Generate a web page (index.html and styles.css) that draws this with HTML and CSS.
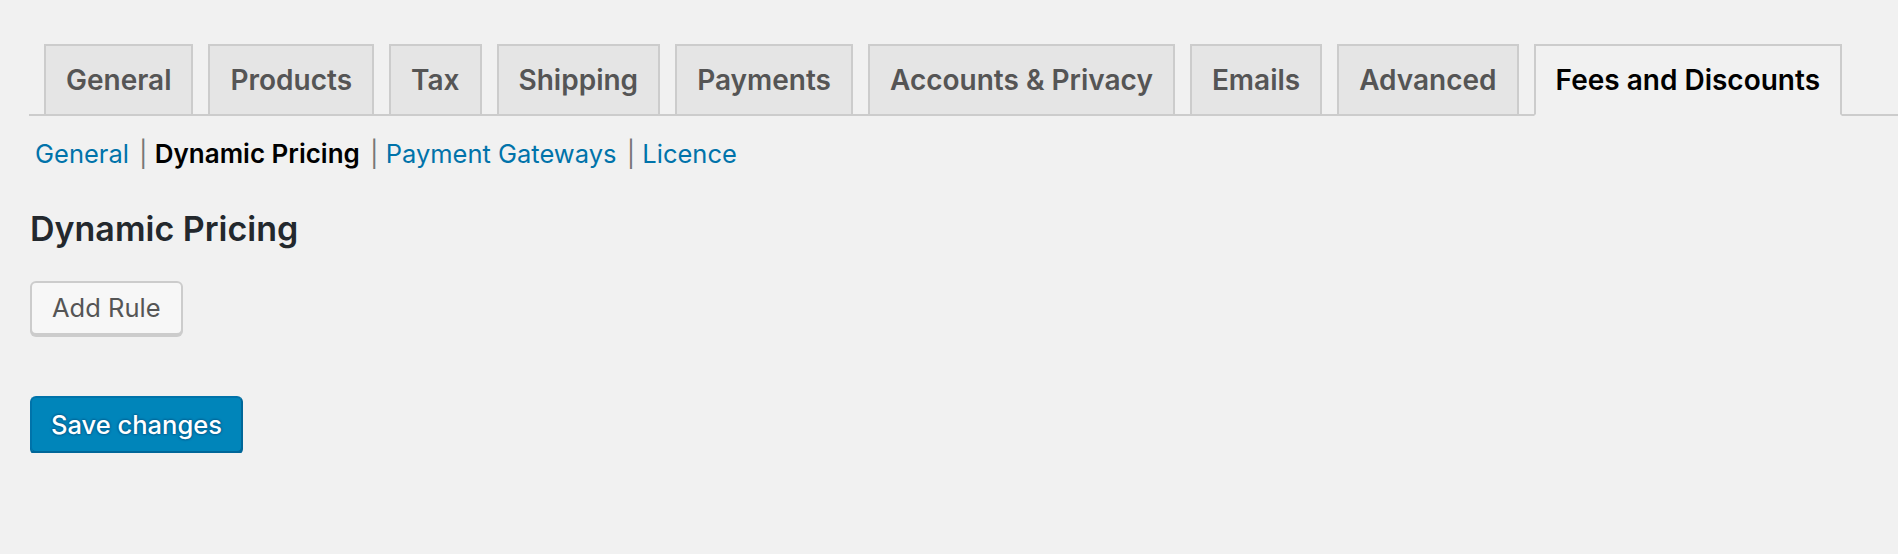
FILE: index.html
```html
<!DOCTYPE html>
<html lang="en">
<head>
<meta charset="utf-8">
<title>Fees and Discounts</title>
<link rel="stylesheet" href="styles.css">
</head>
<body>
<div class="wrap">
  <nav class="tabs">
    <a class="tab" href="#">General</a>
    <a class="tab" href="#">Products</a>
    <a class="tab" href="#">Tax</a>
    <a class="tab" href="#">Shipping</a>
    <a class="tab" href="#">Payments</a>
    <a class="tab" href="#">Accounts &amp; Privacy</a>
    <a class="tab" href="#">Emails</a>
    <a class="tab" href="#">Advanced</a>
    <a class="tab tab-active" href="#">Fees and Discounts</a>
  </nav>
  <ul class="subnav">
    <li><a class="subnav-link" href="#">General</a> | </li>
    <li><a class="subnav-link subnav-current" href="#">Dynamic Pricing</a> | </li>
    <li><a class="subnav-link" href="#">Payment Gateways</a> | </li>
    <li><a class="subnav-link" href="#">Licence</a></li>
  </ul>
  <h2 class="title">Dynamic Pricing</h2>
  <div class="actions">
    <button class="btn" type="button">Add Rule</button>
  </div>
  <p class="submit">
    <button class="btn-primary" type="button">Save changes</button>
  </p>
</div>
</body>
</html>
```

FILE: styles.css
```css
html, body {
  margin: 0;
  padding: 0;
}

body {
  background: #f1f1f1;
  font-family: Inter, "Noto Sans", "Liberation Sans", sans-serif;
  color: #444;
}

.wrap {
  padding: 0 0 0 29px;
}

.tabs {
  display: flex;
  align-items: flex-end;
  padding-top: 44px;
  border-bottom: 2px solid #cccccc;
}

.tab {
  display: block;
  margin-left: 15px;
  margin-bottom: -2px;
  padding: 10px 20px;
  font-size: 28px;
  line-height: 48px;
  font-weight: 600;
  color: #555;
  background: #e5e5e5;
  border: 2px solid #cccccc;
  border-bottom: 2px solid #cccccc;
  text-decoration: none;
  white-space: nowrap;
}

.tab-active {
  background: #f1f1f1;
  color: #000;
  border-bottom-color: #f1f1f1;
}

.subnav {
  list-style: none;
  margin: 12px 0 0;
  padding: 0;
  display: flex;
  font-size: 25.5px;
  line-height: 52px;
  color: #777;
  white-space: pre;
}

.subnav-link {
  padding: 0 3px 0 0;
  color: #0073aa;
  text-decoration: none;
}

.subnav li:first-child .subnav-link {
  padding-left: 6px;
}

.subnav-current {
  color: #000;
  font-size: 26px;
  font-weight: 600;
}

.title {
  margin: 27px 0 0 1px;
  font-size: 34px;
  line-height: 44px;
  font-weight: 600;
  color: #23282d;
}

.actions {
  margin-top: 30px;
}

.btn {
  display: inline-block;
  box-sizing: border-box;
  height: 54px;
  margin-left: 1px;
  padding: 0 20px 2px;
  font-family: inherit;
  font-size: 25.5px;
  line-height: 50px;
  color: #555;
  background: #f7f7f7;
  border: 2px solid #cccccc;
  border-radius: 6px;
  box-shadow: 0 2px 0 #cccccc;
  cursor: pointer;
}

.submit {
  margin: 61px 0 0;
  padding: 0;
}

.btn-primary {
  display: inline-block;
  box-sizing: border-box;
  height: 57px;
  margin-left: 1px;
  padding: 0 19px 2px;
  font-family: inherit;
  font-size: 25.5px;
  font-weight: 500;
  line-height: 53px;
  color: #fff;
  background: #0085ba;
  border: 2px solid #0073aa;
  border-bottom-color: #006799;
  border-right-color: #006799;
  border-radius: 6px;
  box-shadow: 0 2px 0 #006799;
  text-shadow: 0 -1px 2px #006799, 1px 0 2px #006799, 0 1px 2px #006799, -1px 0 2px #006799;
  cursor: pointer;
}
```
